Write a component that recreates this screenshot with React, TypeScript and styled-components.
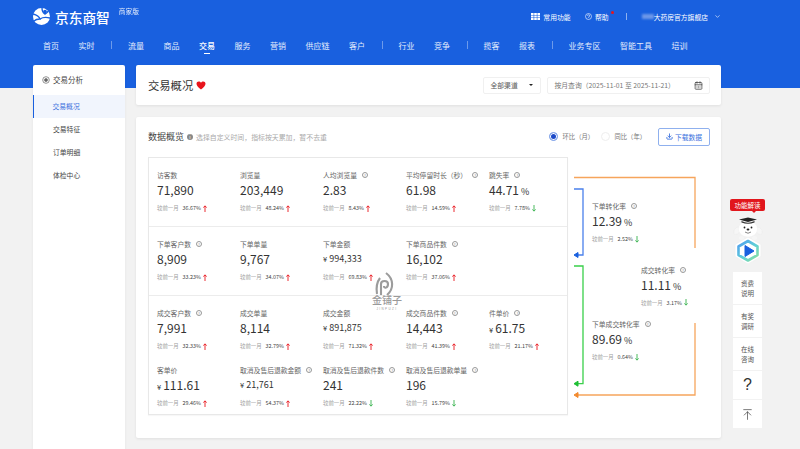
import React from "react";
import styled, { createGlobalStyle } from "styled-components";
import { ChevronDown, CalendarDays, Download, ArrowUpToLine } from "lucide-react";

const GlobalStyle = createGlobalStyle`
  html, body {
    margin: 0;
    padding: 0;
    background: #f2f2f2;
    font-family: "Noto Sans CJK SC", "Noto Sans", sans-serif;
    color: #333;
  }
  * { box-sizing: border-box; }
`;

const Page = styled.div`
  position: relative;
  width: 800px;
  height: 449px;
  overflow: hidden;
  background: #f2f2f2;
`;

const Header = styled.header`
  height: 88px;
  background: #1960df;
  color: #fff;
`;

const TopBar = styled.div`
  display: flex;
  align-items: center;
  height: 33px;
  padding: 0 0 0 33px;
`;

const LogoText = styled.span`
  font-size: 13.7px;
  font-weight: 500;
  margin-left: 5px;
  line-height: 16px;
`;

const Edition = styled.span`
  font-size: 6.7px;
  margin: -12px 0 0 9px;
  opacity: 0.9;
`;

const TopRight = styled.div`
  display: flex;
  align-items: center;
  margin-left: auto;
  margin-right: 79px;
  font-size: 6.8px;
`;

const TopItem = styled.span<{ $left?: number }>`
  position: relative;
  display: flex;
  align-items: center;
  gap: 3.5px;
  margin-left: ${(p) => p.$left ?? 0}px;
`;

const RedDot = styled.i`
  position: absolute;
  right: -5px;
  top: -1px;
  width: 3px;
  height: 3px;
  border-radius: 50%;
  background: #e8141c;
`;

const TopSep = styled.span`
  width: 1px;
  height: 7px;
  background: #8fb2ee;
  margin: 0 15px 0 17px;
`;

const Blurred = styled.span`
  width: 12px;
  height: 5px;
  background: #6c97e8;
  filter: blur(1px);
`;

const Chevron = styled(ChevronDown)`
  margin-left: 6px;
`;

const Nav = styled.nav`
  display: flex;
  align-items: center;
  height: 24px;
  padding-left: 43px;
  font-size: 8px;
`;

const NavItem = styled.span<{ $active?: boolean }>`
  position: relative;
  margin-right: 19.5px;
  font-weight: ${(p) => (p.$active ? 500 : 400)};
  color: ${(p) => (p.$active ? "#fff" : "#e4edfc")};
  white-space: nowrap;
  &::after {
    content: "";
    display: ${(p) => (p.$active ? "block" : "none")};
    position: absolute;
    left: 50%;
    bottom: -3px;
    width: 6px;
    height: 1px;
    margin-left: -3px;
    background: #fff;
  }
`;

const NavSep = styled.span`
  width: 1px;
  height: 8px;
  background: #6d9aea;
  margin-right: 16px;
  margin-left: -3px;
`;

const Body = styled.div`
  position: absolute;
  top: 65px;
  left: 33px;
  display: flex;
  gap: 11px;
`;

const Sidebar = styled.aside`
  width: 92px;
  height: 400px;
  background: #fff;
  border-radius: 2px;
  box-shadow: 0 0 3px rgba(0, 0, 0, 0.06);
`;

const SideTitle = styled.div`
  display: flex;
  align-items: center;
  gap: 3px;
  height: 29.5px;
  padding-left: 9px;
  font-size: 7.5px;
  color: #444;
`;

const SideItem = styled.div<{ $active?: boolean }>`
  display: flex;
  align-items: center;
  height: 23px;
  padding-left: ${(p) => (p.$active ? 18.5 : 20)}px;
  font-size: 6.8px;
  color: ${(p) => (p.$active ? "#3d72de" : "#444")};
  background: ${(p) => (p.$active ? "#f1f5fd" : "transparent")};
  border-left: ${(p) => (p.$active ? "1.5px solid #1960df" : "none")};
`;

const Main = styled.main`
  width: 585px;
  display: flex;
  flex-direction: column;
  gap: 12px;
`;

const TitleCard = styled.section`
  display: flex;
  align-items: center;
  height: 40px;
  padding: 0 11px 0 12px;
  background: #fff;
  border-radius: 2px;
  box-shadow: 0 1px 3px rgba(0, 0, 0, 0.08);
`;

const Title = styled.h1`
  margin: 0;
  font-size: 11.3px;
  font-weight: 400;
  color: #333;
`;

const Heart = styled.span`
  margin-left: 3px;
  display: flex;
`;

const SelectBox = styled.div`
  display: flex;
  align-items: center;
  justify-content: space-between;
  width: 58px;
  height: 17px;
  margin-left: auto;
  padding: 0 7px;
  font-size: 6.8px;
  color: #555;
  border: 1px solid #f0f0f0;
  border-radius: 2px;
`;

const Caret = styled.i`
  width: 0;
  height: 0;
  border-left: 2px solid transparent;
  border-right: 2px solid transparent;
  border-top: 2.5px solid #222;
`;

const DateBox = styled.div`
  display: flex;
  align-items: center;
  justify-content: space-between;
  width: 163px;
  height: 17px;
  margin-left: 6.5px;
  padding: 0 6px 0 6.5px;
  font-size: 6.8px;
  color: #777;
  white-space: nowrap;
  border: 1px solid #f0f0f0;
  border-radius: 2px;
`;

const DataCard = styled.section`
  position: relative;
  height: 321px;
  padding: 0 11px 0 12px;
  background: #fff;
  border-radius: 2px;
  box-shadow: 0 1px 3px rgba(0, 0, 0, 0.08);
`;

const CardHead = styled.div`
  display: flex;
  align-items: center;
  height: 40px;
  padding-bottom: 1px;
`;

const CardTitle = styled.h2`
  margin: 0;
  font-size: 9px;
  font-weight: 400;
  color: #444;
`;

const Hint = styled.span`
  display: flex;
  align-items: center;
  gap: 3px;
  margin-left: 3px;
  font-size: 6.9px;
  color: #aaa;
`;

const InfoDot = styled.i`
  display: flex;
  align-items: center;
  justify-content: center;
  width: 6px;
  height: 6px;
  border-radius: 50%;
  background: #888;
  color: #fff;
  font-size: 5px;
  font-style: normal;
`;

const Radio = styled.label`
  display: flex;
  align-items: center;
  gap: 4.5px;
  font-size: 6.3px;
  color: #777;
`;

const RadioDot = styled.i<{ $on?: boolean }>`
  width: 9px;
  height: 9px;
  border-radius: 50%;
  border: 1px solid ${(p) => (p.$on ? "#8fb0ee" : "#eee")};
  background: ${(p) => (p.$on ? "#1a48c8" : "#fff")};
  box-shadow: ${(p) => (p.$on ? "inset 0 0 0 1px #fff" : "none")};
`;

const Radios = styled.div`
  display: flex;
  align-items: center;
  gap: 7px;
  margin-left: auto;
`;

const DownloadBtn = styled.button`
  display: flex;
  align-items: center;
  justify-content: center;
  gap: 2px;
  width: 52px;
  height: 18px;
  margin: 0 0 0 12px;
  padding: 0;
  font: inherit;
  font-size: 6.8px;
  color: #3d72de;
  background: #fff;
  border: 1px solid #8fb0ee;
  border-radius: 2px;
`;

const Board = styled.div`
  display: flex;
`;

const Table = styled.div`
  width: 420px;
  height: 258px;
  border: 1px solid #e8e8e8;
  box-shadow: 0 1px 1px rgba(0, 0, 0, 0.03);
`;

const TableRow = styled.div<{ $tall?: boolean }>`
  display: grid;
  grid-template-columns: repeat(5, 83px);
  align-content: start;
  row-gap: 14px;
  height: ${(p) => (p.$tall ? 120 : 69)}px;
  padding: 12px 0 0 8px;
  border-bottom: ${(p) => (p.$tall ? "none" : "1px solid #ececec")};
`;

const Metric = styled.div`
  height: 43px;
`;

const Label = styled.div`
  display: flex;
  align-items: center;
  height: 10px;
  font-size: 6.8px;
  color: #666;
  white-space: nowrap;
`;

const Help = styled.span`
  display: inline-flex;
  align-items: center;
  justify-content: center;
  width: 6px;
  height: 6px;
  margin-left: 5px;
  border: 0.5px solid #999;
  border-radius: 50%;
  color: #888;
  font-size: 4px;
  line-height: 1;
`;

const Value = styled.div`
  display: flex;
  align-items: baseline;
  height: 20px;
  line-height: 20px;
  font-size: 12px;
  color: #333;
  white-space: nowrap;
`;

const Small = styled.span<{ $gap?: number }>`
  font-size: 9px;
  margin-left: ${(p) => p.$gap ?? 0}px;
`;

const Unit = styled.span`
  font-size: 7.5px;
  margin-right: 2px;
`;

const Compare = styled.div`
  display: flex;
  align-items: center;
  height: 10px;
  margin-top: 3px;
  font-size: 5.4px;
  color: #a0a0a0;
  white-space: nowrap;
`;

const Pct = styled.span`
  margin: 0 2px 0 4px;
  color: #444;
`;

const Flow = styled.div`
  position: relative;
  flex: 1;
  height: 258px;
`;

const FlowLines = styled.svg`
  position: absolute;
  left: 0;
  top: 0;
`;

const FlowMetric = styled.div<{ $top: number; $left: number }>`
  position: absolute;
  top: ${(p) => p.$top}px;
  left: ${(p) => p.$left}px;
`;

const Mark = styled.svg`
  position: absolute;
  left: 367px;
  top: 272px;
`;

const MarkText = styled.div`
  position: absolute;
  left: 372px;
  top: 295px;
  width: 30px;
  display: flex;
  flex-direction: column;
  align-items: center;
  color: #9a9a9a;
`;

const MarkName = styled.span`
  font-size: 10px;
  line-height: 10px;
  font-weight: 500;
`;

const MarkSub = styled.span`
  margin-top: 3px;
  font-size: 3px;
  line-height: 3px;
  letter-spacing: 1.4px;
  font-family: "Liberation Sans", sans-serif;
`;

const Side = styled.div`
  position: absolute;
  left: 733px;
  top: 199px;
  width: 29px;
  display: flex;
  flex-direction: column;
  align-items: center;
`;

const Tip = styled.div`
  position: relative;
  flex-shrink: 0;
  width: 35px;
  height: 12px;
  margin-bottom: 3px;
  background: #e1161c;
  border-radius: 2px;
  color: #fff;
  font-size: 6.5px;
  line-height: 12px;
  text-align: center;
  &::after {
    content: "";
    position: absolute;
    left: 22px;
    bottom: -2px;
    border-left: 2px solid transparent;
    border-right: 2px solid transparent;
    border-top: 2px solid #e1161c;
  }
`;

const SideBtn = styled.div<{ $h: number }>`
  display: flex;
  align-items: center;
  justify-content: center;
  flex-shrink: 0;
  width: 29px;
  height: ${(p) => p.$h}px;
  margin-bottom: 1px;
  background: #fff;
  font-size: 6.5px;
  line-height: 10.5px;
  color: #555;
  text-align: center;
`;

const QMark = styled.span`
  font-size: 16px;
  font-family: "Liberation Sans", sans-serif;
  color: #333;
`;

const SideGap = styled.div`
  flex-shrink: 0;
  height: 8px;
`;

type Row = {
  label: string;
  value: string;
  unit?: string;
  tail?: string;
  small?: boolean;
  help?: boolean;
  pct: string;
  up: boolean;
};

const rows: Row[][] = [
  [
    { label: "访客数", value: "71,890", pct: "36.67%", up: true },
    { label: "浏览量", value: "203,449", pct: "48.24%", up: true },
    { label: "人均浏览量", value: "2.83", help: true, pct: "8.43%", up: true },
    { label: "平均停留时长（秒）", value: "61.98", help: true, pct: "14.59%", up: true },
    { label: "跳失率", value: "44.71", tail: "%", help: true, pct: "7.78%", up: false },
  ],
  [
    { label: "下单客户数", value: "8,909", help: true, pct: "33.23%", up: true },
    { label: "下单单量", value: "9,767", pct: "34.07%", up: true },
    { label: "下单金额", value: "994,333", unit: "¥", small: true, pct: "69.83%", up: true },
    { label: "下单商品件数", value: "16,102", help: true, pct: "37.06%", up: true },
  ],
  [
    { label: "成交客户数", value: "7,991", help: true, pct: "32.33%", up: true },
    { label: "成交单量", value: "8,114", pct: "32.79%", up: true },
    { label: "成交金额", value: "891,875", unit: "¥", small: true, pct: "71.32%", up: true },
    { label: "成交商品件数", value: "14,443", help: true, pct: "41.39%", up: true },
    { label: "件单价", value: "61.75", unit: "¥", help: true, pct: "21.17%", up: true },
    { label: "客单价", value: "111.61", unit: "¥", pct: "29.46%", up: true },
    { label: "取消及售后退款金额", value: "21,761", unit: "¥", small: true, help: true, pct: "54.37%", up: true },
    { label: "取消及售后退款件数", value: "241", help: true, pct: "22.22%", up: false },
    { label: "取消及售后退款单量", value: "196", help: true, pct: "15.79%", up: false },
  ],
];

const flowRows: (Row & { top: number; left: number })[] = [
  { label: "下单转化率", value: "12.39", tail: "%", help: true, pct: "2.52%", up: false, top: 44, left: 24 },
  { label: "成交转化率", value: "11.11", tail: "%", help: true, pct: "3.17%", up: false, top: 107.5, left: 73 },
  { label: "下单成交转化率", value: "89.69", tail: "%", help: true, pct: "0.64%", up: false, top: 162, left: 24 },
];

const navGroups = [
  ["首页", "实时"],
  ["流量", "商品", "交易", "服务", "营销", "供应链", "客户"],
  ["行业", "竞争"],
  ["揽客", "报表"],
  ["业务专区", "智能工具", "培训"],
];

// thin trend arrow, narrower than the icon packs' ones
const Trend: React.FC<{ up: boolean }> = ({ up }) => (
  <svg width="4" height="7" viewBox="0 0 4 7" fill="none" stroke={up ? "#e8141c" : "#37b24d"} strokeWidth="0.9">
    {up ? <path d="M2 7 V1 M0.4 2.6 L2 0.8 L3.6 2.6" /> : <path d="M2 0 V6 M0.4 4.4 L2 6.2 L3.6 4.4" />}
  </svg>
);

const MetricCell: React.FC<{ m: Row }> = ({ m }) => (
  <Metric>
    <Label>
      {m.label}
      {m.help && <Help>?</Help>}
    </Label>
    <Value>
      {m.unit && <Unit>{m.unit}</Unit>}
      {m.small ? <Small>{m.value}</Small> : m.value}
      {m.tail && <Small $gap={2}>{m.tail}</Small>}
    </Value>
    <Compare>
      较前一月
      <Pct>{m.pct}</Pct>
      <Trend up={m.up} />
    </Compare>
  </Metric>
);

const Logo = () => (
  <svg width="17" height="17" viewBox="0 0 17 17">
    <circle cx="8.5" cy="8.5" r="8.5" fill="#fff" />
    <path d="M0 6 C4 7 6 8 7 11 C4 11 2 12 1 13" fill="none" stroke="#1960df" strokeWidth="1.4" />
    <path d="M7 11 C10 9 13 9 17 10" fill="none" stroke="#1960df" strokeWidth="1.4" />
    <path d="M9 0 C9 3 10 5 12 6 C14 5 15 4 15 3" fill="none" stroke="#1960df" strokeWidth="1.4" />
    <circle cx="12" cy="3.6" r="1.9" fill="#1960df" />
  </svg>
);

const Mascot = () => (
  <svg width="30" height="50" viewBox="0 0 30 50">
    <defs>
      <linearGradient id="hexRim" x1="0" y1="0" x2="1" y2="1">
        <stop offset="0" stopColor="#4f9cf0" />
        <stop offset="0.55" stopColor="#5fd0d6" />
        <stop offset="1" stopColor="#8fe09a" />
      </linearGradient>
    </defs>
    <path d="M15 23 L28 30.5 L28 42.5 L15 50 L2 42.5 L2 30.5 Z" fill="#fff" stroke="#f0f0f0" strokeWidth="0.8" />
    <path d="M15 27 L24.5 32.5 L24.5 41 L15 46.5 L5.5 41 L5.5 32.5 Z" fill="#fff" stroke="url(#hexRim)" strokeWidth="2.6" strokeLinejoin="round" />
    <path d="M12 31.5 L21 37 L12 42.5 Z" fill="#1960df" stroke="#1960df" strokeWidth="1" strokeLinejoin="round" />
    <path d="M6 13 C2 13 0 17 1 20 C3 21 6 20 7 17 Z" fill="#f6f6f6" stroke="#e8e8e8" strokeWidth="0.4" />
    <path d="M24 13 C28 13 30 17 29 20 C27 21 24 20 23 17 Z" fill="#f6f6f6" stroke="#e8e8e8" strokeWidth="0.4" />
    <ellipse cx="15" cy="15" rx="9.5" ry="8" fill="#fff" stroke="#eee" strokeWidth="0.4" />
    <path d="M6 5.5 L15 3.5 L24 5.5 L15 8 Z" fill="#222" />
    <path d="M8.5 7 Q15 10.5 21.5 7 L21.5 8.5 Q15 11 8.5 8.5 Z" fill="#333" />
    <circle cx="11.5" cy="13.5" r="0.9" fill="#222" />
    <circle cx="18.5" cy="13.5" r="0.9" fill="#222" />
    <ellipse cx="15" cy="15.5" rx="1.4" ry="1" fill="#222" />
    <path d="M12 18 Q15 20.5 18 18" fill="none" stroke="#555" strokeWidth="0.7" />
    <ellipse cx="8.5" cy="24" rx="2.6" ry="2" fill="#f6f6f6" />
    <ellipse cx="21.5" cy="24" rx="2.6" ry="2" fill="#f6f6f6" />
  </svg>
);

export default function App() {
  return (
    <Page>
      <GlobalStyle />
      <Header>
        <TopBar>
          <Logo />
          <LogoText>京东商智</LogoText>
          <Edition>商家版</Edition>
          <TopRight>
            <TopItem>
              <svg width="9" height="7" viewBox="0 0 9 7" fill="#fff">
                <rect x="0" y="0" width="2.6" height="2" />
                <rect x="3.2" y="0" width="2.6" height="2" />
                <rect x="6.4" y="0" width="2.6" height="2" />
                <rect x="0" y="2.5" width="2.6" height="2" />
                <rect x="3.2" y="2.5" width="2.6" height="2" />
                <rect x="6.4" y="2.5" width="2.6" height="2" />
                <rect x="0" y="5" width="2.6" height="2" />
                <rect x="3.2" y="5" width="2.6" height="2" />
                <rect x="6.4" y="5" width="2.6" height="2" />
              </svg>
              常用功能
            </TopItem>
            <TopItem $left={14}>
              <svg width="7" height="7" viewBox="0 0 7 7" fill="none" stroke="#fff" strokeWidth="0.6">
                <circle cx="3.5" cy="3.5" r="3" />
                <path d="M2.4 2.7 A1.1 1.1 0 1 1 3.5 4 L3.5 4.6" />
              </svg>
              帮助
              <RedDot />
            </TopItem>
            <TopSep />
            <Blurred />
            <TopItem>大药房官方旗舰店</TopItem>
            <Chevron size={7} />
          </TopRight>
        </TopBar>
        <Nav>
          {navGroups.map((group, g) => (
            <React.Fragment key={g}>
              {group.map((n) => (
                <NavItem key={n} $active={n === "交易"}>
                  {n}
                </NavItem>
              ))}
              {g < navGroups.length - 1 && <NavSep />}
            </React.Fragment>
          ))}
        </Nav>
      </Header>
      <Body>
        <Sidebar>
          <SideTitle>
            <svg width="8" height="8" viewBox="0 0 8 8" fill="none" stroke="#666" strokeWidth="0.7">
              <circle cx="4" cy="4" r="3.3" />
              <circle cx="4" cy="4" r="1.5" fill="#666" />
            </svg>
            交易分析
          </SideTitle>
          <SideItem $active>交易概况</SideItem>
          <SideItem>交易特征</SideItem>
          <SideItem>订单明细</SideItem>
          <SideItem>体检中心</SideItem>
        </Sidebar>
        <Main>
          <TitleCard>
            <Title>交易概况</Title>
            <Heart>
              <svg width="10" height="9" viewBox="0 0 24 22" fill="#e8141c">
                <path d="M12 21 C5 15 1 11 1 6.5 C1 3 3.6 1 6.5 1 C8.8 1 10.8 2.2 12 4.2 C13.2 2.2 15.2 1 17.5 1 C20.4 1 23 3 23 6.5 C23 11 19 15 12 21 Z" />
              </svg>
            </Heart>
            <SelectBox>
              全部渠道
              <Caret />
            </SelectBox>
            <DateBox>
              按月查询（2025-11-01 至 2025-11-21）
              <CalendarDays size={9} color="#444" />
            </DateBox>
          </TitleCard>
          <DataCard>
            <CardHead>
              <CardTitle>数据概览</CardTitle>
              <Hint>
                <InfoDot>i</InfoDot>
                选择自定义时间，指标按天累加，暂不去重
              </Hint>
              <Radios>
                <Radio>
                  <RadioDot $on />
                  环比（月）
                </Radio>
                <Radio>
                  <RadioDot />
                  同比（年）
                </Radio>
              </Radios>
              <DownloadBtn>
                <Download size={7} strokeWidth={3} />
                下载数据
              </DownloadBtn>
            </CardHead>
            <Board>
              <Table>
                {rows.map((row, i) => (
                  <TableRow key={i} $tall={i === 2}>
                    {row.map((m) => (
                      <MetricCell key={m.label} m={m} />
                    ))}
                  </TableRow>
                ))}
              </Table>
              <Flow>
                <FlowLines width="142" height="258" viewBox="0 0 142 258" fill="none">
                  <path d="M6 20.5 H127 V91" stroke="#f6a55c" strokeWidth="1.3" />
                  <path d="M6 32 H15 V98 H10" stroke="#4a80ec" strokeWidth="1.3" />
                  <path d="M10 95.5 L6 98 L10 100.5 Z" fill="#1960df" stroke="#1960df" strokeWidth="1" />
                  <path d="M6 109 H15 V226.7 H10" stroke="#39d04a" strokeWidth="1.3" />
                  <path d="M10 224.2 L6 226.7 L10 229.2 Z" fill="#1fbf35" stroke="#1fbf35" strokeWidth="1" />
                  <path d="M127 166 V238 H10" stroke="#f6a55c" strokeWidth="1.3" />
                  <path d="M10 235.5 L6 238 L10 240.5 Z" fill="#f28a2e" stroke="#f28a2e" strokeWidth="1" />
                </FlowLines>
                {flowRows.map((m) => (
                  <FlowMetric key={m.label} $top={m.top} $left={m.left}>
                    <MetricCell m={m} />
                  </FlowMetric>
                ))}
              </Flow>
            </Board>
          </DataCard>
        </Main>
      </Body>
      <Mark width="32" height="26" viewBox="0 0 32 26" fill="none" stroke="#9c9c9c" strokeWidth="2.1">
        <path d="M19 1 C27 7 27 17 20 23" />
        <path d="M14 23 V12 C14 8 21 8 21 12 C21 16 17 17 17 14" />
        <path d="M10 22 C9 16 10 10 13 6" />
      </Mark>
      <MarkText>
        <MarkName>金铺子</MarkName>
        <MarkSub>JINPUZI</MarkSub>
      </MarkText>
      <Side>
        <Tip>功能解读</Tip>
        <Mascot />
        <SideGap />
        <SideBtn $h={32}>
          资费
          <br />
          说明
        </SideBtn>
        <SideBtn $h={32}>
          有奖
          <br />
          调研
        </SideBtn>
        <SideBtn $h={32}>
          在线
          <br />
          咨询
        </SideBtn>
        <SideBtn $h={28}>
          <QMark>?</QMark>
        </SideBtn>
        <SideBtn $h={28}>
          <ArrowUpToLine size={13} strokeWidth={1.2} color="#333" />
        </SideBtn>
      </Side>
    </Page>
  );
}
